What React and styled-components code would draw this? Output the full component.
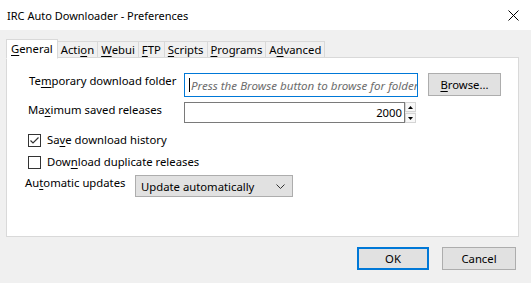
import React from 'react';
import styled, { createGlobalStyle } from 'styled-components';

const GlobalStyle = createGlobalStyle`
  html, body {
    margin: 0;
    padding: 0;
    background: #f0f0f0;
  }
  body {
    font-family: "Noto Sans", "Open Sans", sans-serif;
    font-size: 11.3px;
    color: #000;
  }
`;

const Window = styled.div`
  width: 531px;
  height: 283px;
  display: flex;
  flex-direction: column;
  background: #f0f0f0;
  overflow: hidden;
`;

const TitleBar = styled.div`
  height: 30px;
  background: #fff;
  display: flex;
  align-items: center;
  justify-content: space-between;
  padding: 0 12px 0 7px;
  font-size: 11px;
`;

const CloseIcon = styled.svg`
  width: 11px;
  height: 11px;
`;

const Body = styled.div`
  flex: 1;
  display: flex;
  flex-direction: column;
  padding: 8px 12px 0 6px;
`;

const TabStrip = styled.div`
  display: flex;
  align-items: flex-end;
  height: 20px;
  position: relative;
  z-index: 1;
`;

const Tab = styled.div`
  height: ${p => (p.$active ? '20px' : '17px')};
  padding: 0 ${p => (p.$active ? '4px' : '3px')};
  margin-left: ${p => (p.$first ? '0' : '-1px')};
  border: 1px solid #d9d9d9;
  border-bottom: ${p => (p.$active ? '1px solid #fff' : '1px solid #d9d9d9')};
  background: ${p => (p.$active ? '#fff' : '#f0f0f0')};
  box-sizing: border-box;
  display: flex;
  align-items: center;
  line-height: 1;
  position: relative;
  z-index: ${p => (p.$active ? 2 : 1)};
  margin-bottom: ${p => (p.$active ? '-1px' : '0')};
`;

const Panel = styled.div`
  height: 180px;
  box-sizing: border-box;
  background: #fff;
  border: 1px solid #d9d9d9;
  margin-top: -1px;
  display: flex;
  flex-direction: column;
  padding: 15px 0 0 0;
`;

const Row = styled.div`
  display: flex;
  align-items: flex-start;
  padding-left: ${p => p.$indent || 22}px;
  margin-top: ${p => p.$gap || 0}px;
`;

const Label = styled.div`
  width: ${p => p.$width}px;
  line-height: 16px;
  white-space: nowrap;
`;

const TextField = styled.div`
  width: 234px;
  height: 24px;
  box-sizing: border-box;
  border: 1px solid #0078d7;
  background: #fff;
  display: flex;
  align-items: center;
  padding-left: 4px;
  font-style: italic;
  font-size: 11.6px;
  color: #6d6d6d;
  overflow: hidden;
  white-space: nowrap;
`;

const Caret = styled.span`
  display: inline-block;
  flex: none;
  width: 1px;
  height: 14px;
  background: #000;
  margin-right: 1px;
`;

const Button = styled.div`
  width: ${p => p.$w}px;
  height: ${p => p.$h}px;
  box-sizing: border-box;
  border: ${p => (p.$default ? '2px solid #0078d7' : '1px solid #adadad')};
  background: #e1e1e1;
  display: flex;
  align-items: center;
  justify-content: center;
  margin-left: ${p => p.$ml || 0}px;
`;

const NumberWrap = styled.div`
  display: flex;
  align-items: stretch;
  height: 21px;
`;

const NumberField = styled.div`
  width: 221px;
  box-sizing: border-box;
  border: 1px solid #7a7a7a;
  background: #fff;
  display: flex;
  align-items: center;
  justify-content: flex-end;
  padding-right: 2px;
`;

const Spinner = styled.div`
  width: 11px;
  display: flex;
  flex-direction: column;
  background: #f0f0f0;
`;

const SpinBtn = styled.div`
  flex: 1;
  display: flex;
  align-items: center;
  justify-content: center;
  border: 1px solid #d4d4d4;
  background: #f8f8f8;
  margin-bottom: ${p => (p.$up ? '1px' : '0')};
`;

const CheckRow = styled.div`
  display: flex;
  align-items: center;
  padding-left: 21px;
  margin-top: ${p => p.$gap}px;
  gap: 6px;
  line-height: 16px;
`;

const Box = styled.div`
  width: 13px;
  height: 13px;
  box-sizing: border-box;
  border: 1px solid #333;
  background: #fff;
  display: flex;
  align-items: center;
  justify-content: center;
`;

const Select = styled.div`
  width: 158px;
  height: 22px;
  box-sizing: border-box;
  border: 1px solid #adadad;
  background: #e1e1e1;
  display: flex;
  align-items: center;
  justify-content: space-between;
  padding: 0 7px 0 5px;
`;

const Footer = styled.div`
  display: flex;
  justify-content: flex-end;
  padding: 10px 3px 0 0;
`;

const U = styled.span`
  text-decoration: underline;
  text-underline-offset: 2px;
`;

const tabs = [
  ['', 'G', 'eneral'],
  ['Acti', 'o', 'n'],
  ['', 'W', 'ebui'],
  ['', 'F', 'TP'],
  ['', 'S', 'cripts'],
  ['', 'P', 'rograms'],
  ['A', 'd', 'vanced'],
];

export default function App() {
  return (
    <Window>
      <GlobalStyle />
      <TitleBar>
        <span>IRC Auto Downloader - Preferences</span>
        <CloseIcon viewBox="0 0 11 11">
          <path d="M0.5 0.5 L10.5 10.5 M10.5 0.5 L0.5 10.5" stroke="#000" strokeWidth="1" fill="none" />
        </CloseIcon>
      </TitleBar>
      <Body>
        <TabStrip>
          {tabs.map(([a, k, b], i) => (
            <Tab key={i} $active={i === 0} $first={i === 0}>
              {a}<U>{k}</U>{b}
            </Tab>
          ))}
        </TabStrip>
        <Panel>
          <Row>
            <Label $width={155}>Te<U>m</U>porary download folder</Label>
            <TextField><Caret />Press the Browse button to browse for folder</TextField>
            <Button $w={73} $h={23} $ml={10}><U>B</U>rowse...</Button>
          </Row>
          <Row $gap={5} $indent={21}>
            <Label $width={156}>Ma<U>x</U>imum saved releases</Label>
            <NumberWrap>
              <NumberField>2000</NumberField>
              <Spinner>
                <SpinBtn $up>
                  <svg width="5" height="3" viewBox="0 0 5 3"><path d="M0 3 L2.5 0 L5 3 Z" fill="#000" /></svg>
                </SpinBtn>
                <SpinBtn>
                  <svg width="5" height="3" viewBox="0 0 5 3"><path d="M0 0 L2.5 3 L5 0 Z" fill="#000" /></svg>
                </SpinBtn>
              </Spinner>
            </NumberWrap>
          </Row>
          <CheckRow $gap={9}>
            <Box>
              <svg width="11" height="11" viewBox="0 0 11 11">
                <path d="M1.5 5.5 L4 8 L9.5 2.5" stroke="#333" strokeWidth="1.2" fill="none" />
              </svg>
            </Box>
            <span>Sa<U>v</U>e download history</span>
          </CheckRow>
          <CheckRow $gap={6}>
            <Box />
            <span>Dow<U>n</U>load duplicate releases</span>
          </CheckRow>
          <Row $gap={5} $indent={18}>
            <Label $width={110}>Au<U>t</U>omatic updates</Label>
            <Select>
              <span>Update automatically</span>
              <svg width="9" height="5" viewBox="0 0 9 5">
                <path d="M0.5 0.5 L4.5 4.5 L8.5 0.5" stroke="#333" strokeWidth="1" fill="none" />
              </svg>
            </Select>
          </Row>
        </Panel>
        <Footer>
          <Button $w={72} $h={23} $default>OK</Button>
          <Button $w={74} $h={23} $ml={13}>Cancel</Button>
        </Footer>
      </Body>
    </Window>
  );
}
